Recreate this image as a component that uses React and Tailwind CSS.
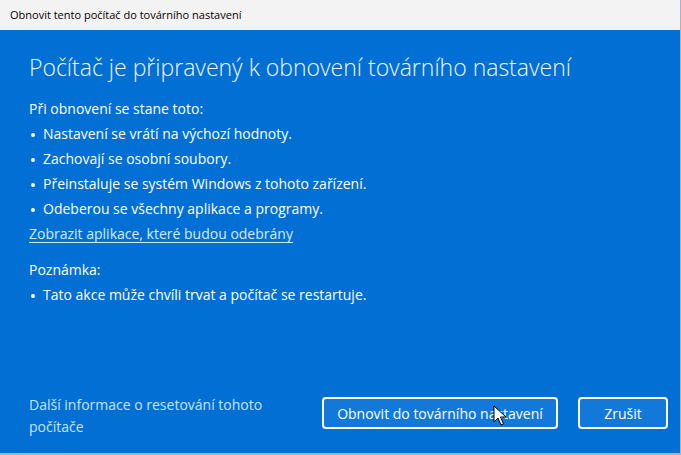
const bullets = [
  'Nastavení se vrátí na výchozí hodnoty.',
  'Zachovají se osobní soubory.',
  'Přeinstaluje se systém Windows z tohoto zařízení.',
  'Odeberou se všechny aplikace a programy.',
]

function Bullet({ children }) {
  return (
    <li className="flex h-[25px] items-center">
      <span className="mr-[8px] ml-[2px] mt-[2px] h-[4px] w-[4px] rounded-full bg-white" />
      <span>{children}</span>
    </li>
  )
}

function Cursor() {
  return (
    <svg className="absolute left-[493px] top-[405px]" width="14" height="22" viewBox="0 0 14 22">
      <path d="M1 1 L1 17 L5 13 L8 20 L10.5 19 L7.5 12 L13 12 Z" fill="#fff" stroke="#000" strokeWidth="1" strokeLinejoin="round" />
    </svg>
  )
}

export default function App() {
  return (
    <div className="relative h-[455px] w-[681px] bg-[#aab4bf] font-['Open_Sans',sans-serif]">
      <div className="flex h-[453px] w-[680px] flex-col">
        {/* Title bar */}
        <div className="flex h-[30px] items-center bg-[#f3f3f3] pl-[10px] text-[11px] text-black">
          Obnovit tento počítač do továrního nastavení
        </div>

        {/* Body */}
        <div className="flex flex-1 flex-col bg-[#016fd4] px-[29px] text-white">
          <h1 className="mt-[20px] text-[23px] font-light leading-[34px] text-[#f2f8ff]">
            Počítač je připravený k obnovení továrního nastavení
          </h1>

          <div className="mt-[12px] text-[14px]">
            <p className="flex h-[25px] items-center">Při obnovení se stane toto:</p>
            <ul>
              {bullets.map((b, i) => <Bullet key={i}>{b}</Bullet>)}
            </ul>
            <p className="flex h-[25px] items-center">
              <span className="text-[#d6ebff] underline underline-offset-[3px]">Zobrazit aplikace, které budou odebrány</span>
            </p>

            <p className="mt-[11px] flex h-[25px] items-center">Poznámka:</p>
            <ul>
              <Bullet>Tato akce může chvíli trvat a počítač se restartuje.</Bullet>
            </ul>
          </div>

          <div className="mt-auto mb-[15px] flex items-start justify-between">
            <p className="mt-[-3px] w-[260px] text-[14px] leading-[22px] text-[#c8e4ff]">
              Další informace o resetování tohoto počítače
            </p>
            <div className="mr-[-17px] flex gap-[20px]">
              <button className="h-[32px] w-[236px] rounded-[4px] border-2 border-white bg-[#1278d9] text-[14px] text-white">
                Obnovit do továrního nastavení
              </button>
              <button className="h-[32px] w-[90px] rounded-[4px] border-2 border-white bg-[#1278d9] text-[14px] text-white">
                Zrušit
              </button>
            </div>
          </div>
        </div>
      </div>
      <Cursor />
    </div>
  )
}
